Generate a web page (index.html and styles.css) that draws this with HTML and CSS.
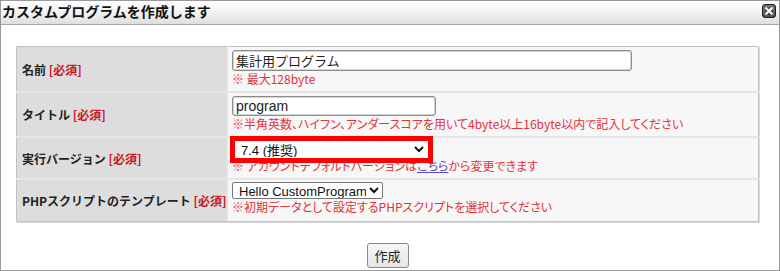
FILE: index.html
```html
<!DOCTYPE html>
<html lang="ja">
<head>
<meta charset="utf-8">
<title>カスタムプログラムを作成します</title>
<link rel="stylesheet" href="styles.css">
</head>
<body>
<div class="dialog">
  <div class="titlebar">
    <span class="title">カスタムプログラムを作成します</span>
    <span class="close" aria-label="閉じる">
      <svg width="14" height="14" viewBox="0 0 14 14">
        <defs>
          <linearGradient id="cg" x1="0" y1="0" x2="0" y2="1">
            <stop offset="0" stop-color="#6a6a6a"/>
            <stop offset="1" stop-color="#2e2e2e"/>
          </linearGradient>
        </defs>
        <rect x="0.5" y="0.5" width="13" height="13" rx="2.5" fill="url(#cg)" stroke="#1e1e1e"/>
        <rect x="2" y="2" width="10" height="10" rx="1" fill="none" stroke="#8a8a8a" stroke-width="0.8"/>
        <path d="M4.2 4.2 L9.8 9.8 M9.8 4.2 L4.2 9.8" stroke="#ffffff" stroke-width="2" stroke-linecap="square"/>
      </svg>
    </span>
  </div>
  <div class="body">
    <table class="form">
      <tr class="row r1">
        <th class="label">名前 <span class="req">[必須]</span></th>
        <td class="value">
          <input class="text wide" type="text" value="集計用プログラム">
          <div class="note">※ 最大128byte</div>
        </td>
      </tr>
      <tr class="row r2">
        <th class="label">タイトル <span class="req">[必須]</span></th>
        <td class="value">
          <input class="text short" type="text" value="program">
          <div class="note">※半角英数、ハイフン、アンダースコアを用いて4byte以上16byte以内で記入してください</div>
        </td>
      </tr>
      <tr class="row r3">
        <th class="label">実行バージョン <span class="req">[必須]</span></th>
        <td class="value">
          <select class="sel version"><option>7.4 (推奨)</option></select>
          <div class="note">※ アカウントデフォルトバージョンは<a class="link" href="#">こちら</a>から変更できます</div>
        </td>
      </tr>
      <tr class="row r4">
        <th class="label">PHPスクリプトのテンプレート <span class="req">[必須]</span></th>
        <td class="value">
          <select class="sel tmpl"><option>Hello CustomProgram</option></select>
          <div class="note">※初期データとして設定するPHPスクリプトを選択してください</div>
        </td>
      </tr>
    </table>
    <div class="actions">
      <button class="btn" type="button">作成</button>
    </div>
  </div>
</div>
</body>
</html>
```

FILE: styles.css
```css
html, body {
  margin: 0;
  padding: 0;
  background: #ffffff;
}

body {
  font-family: "Noto Sans CJK JP", "Liberation Sans", sans-serif;
  color: #222;
}

.dialog {
  box-sizing: border-box;
  width: 780px;
  height: 271px;
  border: 1px solid #9a9a9a;
  background: #ffffff;
  overflow: hidden;
}

.titlebar {
  height: 23px;
  border-bottom: 1px solid #a8a8a8;
  background: linear-gradient(to bottom, #ffffff 0%, #f1f1f1 55%, #dedede 100%);
  display: flex;
  justify-content: space-between;
  align-items: flex-start;
  padding: 0 3px 0 1px;
}

.title {
  font-size: 14px;
  font-weight: bold;
  line-height: 20px;
  color: #111;
}

.close {
  margin-top: 3px;
  display: block;
  width: 14px;
  height: 14px;
}

.close svg {
  display: block;
}

.body {
  padding: 21px 20px 0 15px;
}

.form {
  width: 743px;
  border-collapse: collapse;
  border: 1px solid #c2c2c2;
  box-shadow: 1px 1px 0 #dadada;
}

.row + .row > th,
.row + .row > td {
  border-top: 2px solid #e6e6e6;
}

.label {
  width: 205px;
  background: #dddddd;
  text-align: left;
  vertical-align: middle;
  font-size: 12px;
  font-weight: bold;
  color: #222;
  padding: 0 0 0 5px;
  border-right: 1px solid #e8e8e8;
  white-space: nowrap;
}

.req {
  color: #c8161d;
  font-weight: bold;
}

.value {
  background: #f7f7f7;
  vertical-align: top;
  padding: 3px 4px 4px 4px;
}

.r3 .value {
  padding-top: 2px;
  padding-bottom: 4px;
}

.r4 .value {
  padding-top: 2px;
  padding-bottom: 6px;
}

.text {
  display: block;
  box-sizing: border-box;
  margin: 0;
  height: 21px;
  border: 1px solid #8c8c8c;
  border-radius: 3px;
  box-shadow: inset 0 0 0 1px #d4d4d4;
  background: #ffffff;
  font-family: "Liberation Sans", "Noto Sans CJK JP", sans-serif;
  font-size: 13px;
  color: #222;
  padding: 0 3px;
}

.wide {
  width: 400px;
}

.short {
  width: 204px;
  height: 20px;
  font-size: 14px;
}

.sel {
  display: block;
  box-sizing: border-box;
  margin: 0;
  font-family: "Liberation Sans", "Noto Sans CJK JP", sans-serif;
  font-size: 13px;
  color: #111;
  background-color: #ffffff;
}

.version {
  width: 193px;
  height: 17px;
  margin-left: 3px;
  margin-top: 1px;
  border: 1px solid #ffffff;
  outline: 5px solid #ff0000;
  padding: 0 0 0 1px;
}

.tmpl {
  width: 151px;
  height: 17px;
  border: 1px solid #767676;
  border-radius: 2px;
  padding: 0 0 0 2px;
}

.note {
  font-size: 12px;
  line-height: 16px;
  color: #e2323b;
  font-feature-settings: "palt";
  white-space: nowrap;
}

.link {
  color: #5b47c8;
  text-decoration: underline;
}

.actions {
  margin-top: 20px;
  text-align: center;
}

.btn {
  box-sizing: border-box;
  width: 42px;
  height: 25px;
  margin: 0;
  padding: 0;
  border: 1px solid #8a8a8a;
  border-radius: 3px;
  background: linear-gradient(to bottom, #f6f6f6, #e6e6e6);
  font-family: "Noto Sans CJK JP", sans-serif;
  font-size: 13px;
  color: #222;
}
```
